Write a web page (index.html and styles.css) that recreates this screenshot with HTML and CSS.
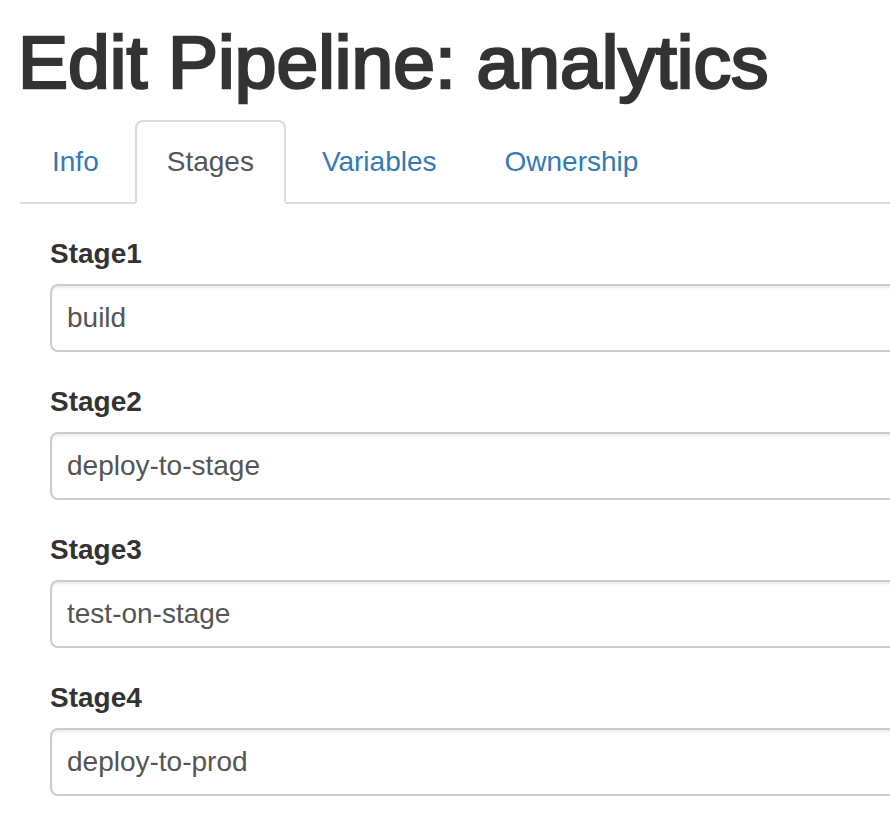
FILE: index.html
```html
<!DOCTYPE html>
<html>
<head>
<meta charset="utf-8">
<title>Edit Pipeline: analytics</title>
<link rel="stylesheet" href="styles.css">
</head>
<body>
<div class="page">
  <h1 class="title">Edit Pipeline: analytics</h1>
  <ul class="tabs">
    <li class="tab"><a href="#">Info</a></li>
    <li class="tab active"><a href="#">Stages</a></li>
    <li class="tab"><a href="#">Variables</a></li>
    <li class="tab"><a href="#">Ownership</a></li>
  </ul>
  <div class="tab-content">
    <form class="stages">
      <div class="form-group">
        <label class="label" for="s1">Stage1</label>
        <input class="control" id="s1" type="text" value="build">
      </div>
      <div class="form-group">
        <label class="label" for="s2">Stage2</label>
        <input class="control" id="s2" type="text" value="deploy-to-stage">
      </div>
      <div class="form-group">
        <label class="label" for="s3">Stage3</label>
        <input class="control" id="s3" type="text" value="test-on-stage">
      </div>
      <div class="form-group">
        <label class="label" for="s4">Stage4</label>
        <input class="control" id="s4" type="text" value="deploy-to-prod">
      </div>
      <div class="form-group">
        <label class="label" for="s5">Stage5</label>
        <input class="control" id="s5" type="text" value="">
      </div>
    </form>
  </div>
</div>
</body>
</html>
```
FILE: styles.css
```css
html, body {
  margin: 0;
  padding: 0;
  background: #fff;
}
body {
  font-family: "Liberation Sans", Arial, Helvetica, sans-serif;
  color: #333;
  overflow: hidden;
}
.page {
  padding-left: 20px;
  overflow: hidden;
  height: 836px;
}
.title {
  margin: 21px 0 16px -2px;
  font-size: 75px;
  font-weight: 400;
  line-height: 1.1;
  color: #333;
  -webkit-text-stroke: 2.6px #333;
}
.tabs {
  list-style: none;
  margin: 0;
  padding: 0;
  display: flex;
  border-bottom: 2px solid #ddd;
}
.tab {
  margin-bottom: -2px;
}
.tab a {
  display: block;
  margin-right: 4px;
  padding: 20px 30px;
  font-size: 28px;
  line-height: 40px;
  color: #337ab7;
  text-decoration: none;
  border: 2px solid transparent;
  border-radius: 8px 8px 0 0;
}
.tab.active a {
  color: #555;
  background: #fff;
  border-color: #ddd #ddd transparent #ddd;
}
.tab-content {
  padding: 30px 0 0 30px;
}
.stages {
  width: 900px;
}
.form-group {
  display: flex;
  flex-direction: column;
  margin-bottom: 30px;
}
.label {
  font-size: 28px;
  font-weight: 700;
  line-height: 40px;
  margin-bottom: 10px;
  color: #333;
}
.control {
  box-sizing: border-box;
  height: 68px;
  width: 100%;
  padding: 12px 15px;
  font-family: "Liberation Sans", Arial, Helvetica, sans-serif;
  font-size: 28px;
  color: #555;
  background: #fff;
  border: 2px solid #ccc;
  border-radius: 8px;
  box-shadow: inset 0 2px 2px rgba(0, 0, 0, 0.075);
  outline: none;
}
```
